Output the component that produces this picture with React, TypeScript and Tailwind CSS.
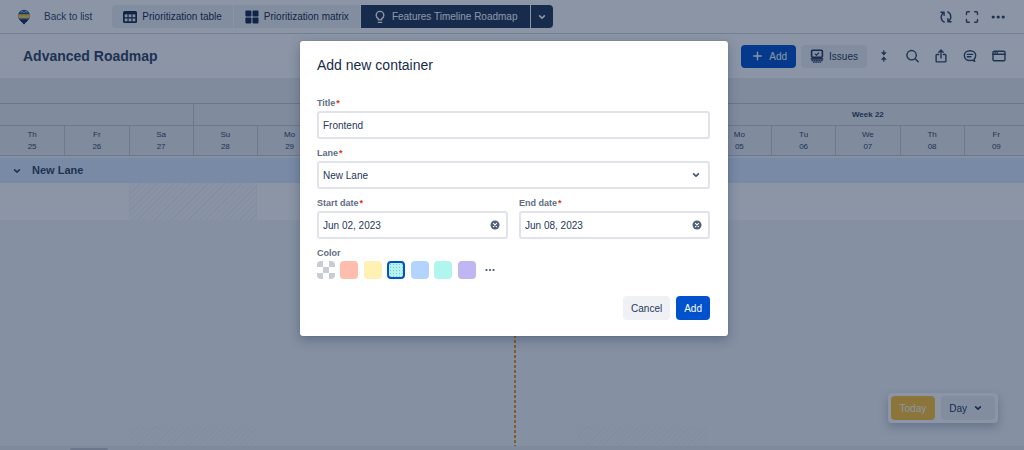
import { ReactNode } from "react";
import clsx from "clsx";

type IconProps = { className?: string };

const days = [
  ["Th", "25"],
  ["Fr", "26"],
  ["Sa", "27"],
  ["Su", "28"],
  ["Mo", "29"],
  ["Tu", "30"],
  ["We", "31"],
  ["Th", "01"],
  ["Fr", "02"],
  ["Sa", "03"],
  ["Su", "04"],
  ["Mo", "05"],
  ["Tu", "06"],
  ["We", "07"],
  ["Th", "08"],
  ["Fr", "09"],
];

const swatches = [
  {
    name: "Transparent",
    fill: "bg-[conic-gradient(#fff_25%,#c9ccd6_0_50%,#fff_0_75%,#c9ccd6_0)] bg-[length:12px_12px]",
  },
  { name: "Red", fill: "bg-[#ffbdad]" },
  { name: "Yellow", fill: "bg-[#fff0b3]" },
  {
    name: "Teal dotted",
    fill: "bg-[#b3f5ee] bg-[radial-gradient(circle,#8cc0cc_35%,transparent_45%)] bg-[length:3px_3px]",
  },
  { name: "Blue", fill: "bg-[#b3d4ff]" },
  { name: "Teal", fill: "bg-[#b0f5ee]" },
  { name: "Purple", fill: "bg-[#c0b6f2]" },
];

function Chevron({ className }: IconProps) {
  return (
    <svg viewBox="0 0 10 10" className={clsx("h-[10px] w-[10px]", className)} fill="none" stroke="currentColor" strokeWidth="1.6" strokeLinecap="round" strokeLinejoin="round">
      <path d="M2.6 3.9 5 6.2l2.4-2.3" />
    </svg>
  );
}

function Logo() {
  return (
    <svg viewBox="0 0 14 16" className="h-4 w-[14px]">
      <path d="M7 .8a6 6 0 0 0-6 6c0 2.6 1.6 4.4 3.3 6.2h5.4C11.4 11.2 13 9.4 13 6.8a6 6 0 0 0-6-6z" fill="#24508f" />
      <path d="M1.3 5.2h11.4c.4 1.7.1 3-.6 4.3H1.9C1.2 8.2.9 6.9 1.3 5.2z" fill="#ffc42e" />
      <path d="M3.5 3.7 5.2 2.3 7 3.7l1.8-1.4 1.7 1.4M2 8.4l1.7-1.2 1.7 1.2L7 7.2l1.7 1.2 1.7-1.2L12 8.4" fill="none" stroke="#d8e2f2" strokeWidth=".8" />
      <path d="M3.4 11h7.2L7.8 14.7a1 1 0 0 1-1.6 0z" fill="#172b4d" />
    </svg>
  );
}

function TableIcon() {
  return (
    <svg viewBox="0 0 14 12" className="h-3 w-[14px]">
      <rect width="14" height="12" rx="1.5" fill="currentColor" />
      <g fill="#eff0f3">
        <rect x="1.7" y="3.4" width="2.8" height="2.8" />
        <rect x="5.6" y="3.4" width="2.8" height="2.8" />
        <rect x="9.5" y="3.4" width="2.8" height="2.8" />
        <rect x="1.7" y="7.5" width="2.8" height="2.8" />
        <rect x="5.6" y="7.5" width="2.8" height="2.8" />
        <rect x="9.5" y="7.5" width="2.8" height="2.8" />
      </g>
    </svg>
  );
}

function MatrixIcon() {
  return (
    <svg viewBox="0 0 14 14" className="h-[14px] w-[14px]" fill="currentColor">
      <rect x=".4" y=".6" width="6" height="5.9" rx=".8" />
      <rect x="7.5" y=".6" width="6" height="5.9" rx=".8" />
      <rect x=".4" y="7.5" width="6" height="5.9" rx=".8" />
      <rect x="7.5" y="7.5" width="6" height="5.9" rx=".8" />
    </svg>
  );
}

function Stroke({ children }: { children: ReactNode }) {
  return (
    <svg viewBox="0 0 14 14" className="h-[14px] w-[14px]" fill="none" stroke="currentColor" strokeWidth="1.4" strokeLinecap="round" strokeLinejoin="round">
      {children}
    </svg>
  );
}

function IconButton({ label, children }: { label: string; children: ReactNode }) {
  return (
    <button type="button" aria-label={label} className="flex items-center justify-center text-[#344563]">
      {children}
    </button>
  );
}

function TopBar() {
  return (
    <header className="flex h-[34px] items-center border-b border-[#d5d8de] pr-[19px] pl-[17px]">
      <Logo />
      <a href="#list" className="ml-[13px] text-[#344563]">
        Back to list
      </a>
      <nav className="ml-5 flex h-[23px] gap-px text-[#172b4d]">
        <button type="button" className="flex items-center gap-[5px] rounded-l-sm bg-[#eff0f3] px-[11px]">
          <TableIcon />
          Prioritization table
        </button>
        <button type="button" className="flex items-center gap-[5px] bg-[#eff0f3] px-[11px]">
          <MatrixIcon />
          Prioritization matrix
        </button>
        <button type="button" className="flex items-center gap-[5px] bg-[#253858] px-3 text-white">
          <Stroke>
            <path d="M5.4 9.9V8.7C4 8 3.2 6.7 3.2 5.2a3.8 3.8 0 0 1 7.6 0c0 1.5-.8 2.8-2.2 3.5v1.2zM5.4 12.4h3.2" />
          </Stroke>
          Features Timeline Roadmap
        </button>
        <button type="button" aria-label="More views" className="flex w-[22px] items-center justify-center rounded-r-sm bg-[#253858] text-white">
          <Chevron />
        </button>
      </nav>
      <div className="ml-auto flex gap-3">
        <IconButton label="Refresh">
          <Stroke>
            <path d="M5.2 12.1C3.4 11.3 2.2 9.4 2.2 7.2c0-2 1-3.7 2.7-4.7M1.9 2.2h3.2v3.2" />
            <path d="M8.8 1.9c1.8.8 3 2.7 3 4.9 0 2-1 3.7-2.7 4.7M12.1 11.8H8.9V8.6" />
          </Stroke>
        </IconButton>
        <IconButton label="Full screen">
          <Stroke>
            <path d="M1.5 4.5V2.7a1 1 0 0 1 1-1h1.8M9.7 1.7h1.8a1 1 0 0 1 1 1v1.8M12.5 9.5v1.8a1 1 0 0 1-1 1H9.7M4.3 12.3H2.5a1 1 0 0 1-1-1V9.5" />
          </Stroke>
        </IconButton>
        <IconButton label="More">
          <svg viewBox="0 0 14 14" className="h-[14px] w-[14px]" fill="currentColor">
            <circle cx="2.2" cy="7" r="1.6" />
            <circle cx="7.2" cy="7" r="1.6" />
            <circle cx="12.2" cy="7" r="1.6" />
          </svg>
        </IconButton>
      </div>
    </header>
  );
}

function Toolbar() {
  return (
    <div className="flex h-11 items-center pr-[18px] pl-[23px]">
      <h1 className="text-[14px] font-bold text-[#344563]">Advanced Roadmap</h1>
      <div className="ml-auto flex items-center gap-[5px]">
        <button type="button" className="flex h-[23px] items-center gap-[5px] rounded-sm bg-[#0052cc] px-[9px] text-white">
          <Stroke>
            <path d="M7.5 3.2v7.6M3.7 7h7.6" />
          </Stroke>
          Add
        </button>
        <button type="button" className="flex h-[23px] items-center gap-[5px] rounded-sm bg-[#eff0f3] px-[9px] text-[#253858]">
          <svg viewBox="0 0 14 14" className="h-[14px] w-[14px]" fill="none" stroke="currentColor" strokeWidth="1.6">
            <rect x="1.6" y="1.3" width="10.8" height="7" rx="1" />
            <path d="m5 4.9 1.5 1.3L9 3.7" strokeWidth="1.2" />
            <path d="M.8 9.9h12.4" strokeWidth="1.6" />
            <path d="M1.5 11.6h11" strokeWidth="1.2" strokeDasharray="1.8 .5" />
            <path d="M3 13.2h8" strokeWidth="1.2" strokeDasharray="1.8 .5" />
          </svg>
          Issues
        </button>
      </div>
      <div className="ml-[9px] flex items-center gap-[15px]">
        <IconButton label="Collapse rows">
          <svg viewBox="0 0 14 14" className="h-[14px] w-[14px]" fill="currentColor">
            <path d="M7.2 1.200h1.200V3.200h2.400L7.800 6.500 4.800 3.200h2.400zM7.200 12.800h1.200v-2h2.400L7.800 7.500 4.800 10.800h2.400z" />
          </svg>
        </IconButton>
        <IconButton label="Search">
          <Stroke>
            <circle cx="6.6" cy="6.2" r="4.7" />
            <path d="m10.1 9.7 3.1 3.1" />
          </Stroke>
        </IconButton>
        <IconButton label="Share">
          <Stroke>
            <path d="M4.6 5.5H2.9a.8.8 0 0 0-.8.8v5.8c0 .4.4.8.8.8h8.2c.4 0 .8-.4.8-.8V6.3a.8.8 0 0 0-.8-.8H9.4M7 9V1.2M4.8 3.200 7 1.100l2.200 2.100" />
          </Stroke>
        </IconButton>
        <IconButton label="Comments">
          <Stroke>
            <path d="M7 1.7c3.2 0 5.7 2.1 5.7 4.9 0 1.5-.6 2.7-1.6 3.6l.6 2.2-2.4-1.2c-.7.2-1.5.3-2.3.3-3.2 0-5.7-2.1-5.7-4.9S3.8 1.7 7 1.7zM4.3 5.4h5.4M4.3 7.8h3.6" />
          </Stroke>
        </IconButton>
        <IconButton label="Details panel">
          <Stroke>
            <rect x="1" y="2.2" width="12" height="9.6" rx="1.2" />
            <path d="M1 5.3h12M3 3.7h.2M5 3.7h.2" />
          </Stroke>
        </IconButton>
      </div>
    </div>
  );
}

const weekendClass =
  "h-5 self-end bg-[repeating-linear-gradient(135deg,#f4f5f7_0px,#f4f5f7_3px,#eef0f3_3px,#eef0f3_4px)]";

function Timeline() {
  return (
    <section className="flex flex-1 flex-col overflow-hidden bg-[#f4f5f8] text-[#344563]">
      <div className="-mr-1 flex flex-1 flex-col">
        <div className="bg-[#ebecf0] text-[8px] leading-3">
          <div className="h-[25px]" />
          <div className="flex h-[22px] overflow-hidden border-t border-[#bfc4ce]">
            <div className="w-3/16 shrink-0" />
            <div className="w-7/16 shrink-0 border-l border-[#c5cad3]" />
            <div className="flex w-7/16 shrink-0 items-center justify-center border-l border-[#c5cad3] font-bold">Week 22</div>
          </div>
          <div className="grid h-[31px] grid-cols-16 border-t border-b border-[#c5cad3]">
            {days.map(([day, date]) => (
              <div key={date} className="flex flex-col items-center justify-center border-l border-[#c5cad3] first:border-l-0">
                <span>{day}</span>
                <span>{date}</span>
              </div>
            ))}
          </div>
        </div>

        {/* Lane */}
        <div className="mt-[2px] flex h-[25px] items-center gap-[10px] bg-[#deebff] px-3">
          <Chevron />
          <h2 className="text-[11px] font-bold">New Lane</h2>
        </div>
        <div className="grid h-[37px] grid-cols-16 bg-white">
          <div className="col-span-2 col-start-3 border-x border-[#f4f5f7] bg-[repeating-linear-gradient(135deg,#fcfcfd_0px,#fcfcfd_3px,#f1f2f5_3px,#f1f2f5_4px)]" />
        </div>

        <div className="grid flex-1 grid-cols-16">
          <div className="col-start-9 row-start-1 w-[2px] bg-[repeating-linear-gradient(180deg,#f0951f_0px,#f0951f_3px,transparent_3px,transparent_5px)]" />
          <div className={clsx("col-span-2 col-start-3 row-start-1", weekendClass)} />
          <div className={clsx("col-span-2 col-start-10 row-start-1", weekendClass)} />
        </div>
        <div className="h-1 border-t border-[#e6e8ec] bg-[#eaebee] pt-px">
          <div className="ml-[70px] h-[2px] w-[38px] rounded-t bg-[#c5c7cc]" />
        </div>
      </div>
    </section>
  );
}

function ZoomPanel() {
  return (
    <div className="absolute right-[26px] bottom-[27px] flex gap-[6px] rounded-sm bg-white p-[3px] shadow-[0_4px_10px_rgba(9,30,66,0.25)]">
      <button type="button" className="h-6 rounded-sm bg-[#ffc233] px-[9px] text-white">
        Today
      </button>
      <button type="button" className="flex h-6 items-center gap-[6px] rounded-sm bg-[#eff0f3] pr-3 pl-2 text-[#253858]">
        Day
        <Chevron />
      </button>
    </div>
  );
}

const inputClass =
  "h-7 w-full appearance-none rounded-[3px] border-2 border-[#e1e3eb] bg-white pr-7 pl-1 text-[#253858] outline-none";

function Field({ id, label, children }: { id: string; label: string; children: ReactNode }) {
  return (
    <div className="flex flex-1 flex-col gap-[2px]">
      <label htmlFor={id} className="text-[9px] leading-3 font-bold text-[#5e6c84]">
        {label}
        <span className="ml-px text-[#de350b]">*</span>
      </label>
      <div className="relative">{children}</div>
    </div>
  );
}

function DateField({ id, label, value }: { id: string; label: string; value: string }) {
  return (
    <Field id={id} label={label}>
      <input id={id} type="text" defaultValue={value} className={inputClass} />
      <button type="button" aria-label={`Clear ${label}`} className="absolute inset-y-0 right-2 flex items-center">
        <svg viewBox="0 0 10 10" className="h-[10px] w-[10px]">
          <circle cx="5" cy="5" r="4.5" fill="#505f79" />
          <path d="m3.4 3.4 3.2 3.2M6.6 3.4 3.4 6.6" stroke="#fff" strokeWidth="1.1" strokeLinecap="round" />
        </svg>
      </button>
    </Field>
  );
}

function ContainerDialog() {
  return (
    <form
      role="dialog"
      aria-labelledby="dialog-title"
      className="w-full max-w-[428px] rounded-[3px] bg-white py-4 pr-[18px] pl-[17px] shadow-[0_0_1px_rgba(9,30,66,0.3),0_4px_12px_rgba(9,30,66,0.3)]"
    >
      <h2 id="dialog-title" className="text-[14px] leading-4 text-[#172b4d]">
        Add new container
      </h2>

      <div className="mt-6 flex flex-col gap-2">
        <Field id="title" label="Title">
          <input id="title" type="text" defaultValue="Frontend" className={inputClass} />
        </Field>
        <Field id="lane" label="Lane">
          <select id="lane" className={inputClass}>
            <option>New Lane</option>
          </select>
          <Chevron className="pointer-events-none absolute top-[9px] right-[9px] text-[#42526e]" />
        </Field>
        <div className="flex gap-[11px]">
          <DateField id="start" label="Start date" value="Jun 02, 2023" />
          <DateField id="end" label="End date" value="Jun 08, 2023" />
        </div>
        <fieldset>
          <legend className="mb-[2px] text-[9px] leading-3 font-bold text-[#5e6c84]">Color</legend>
          <div className="flex w-[182px] justify-between">
            {swatches.map((swatch) => (
              <input
                key={swatch.name}
                type="radio"
                name="color"
                aria-label={swatch.name}
                defaultChecked={swatch.name === "Teal dotted"}
                className={clsx(
                  "h-[18px] w-[18px] appearance-none rounded-[4px] border-[#0052cc] checked:border-2",
                  swatch.fill
                )}
              />
            ))}
            <button type="button" aria-label="More colors" className="flex h-[18px] w-[18px] items-center justify-center text-[#42526e]">
              <svg viewBox="0 0 10 4" className="h-1 w-[10px]" fill="currentColor">
                <circle cx="1.5" cy="2" r="1.1" />
                <circle cx="5" cy="2" r="1.1" />
                <circle cx="8.5" cy="2" r="1.1" />
              </svg>
            </button>
          </div>
        </fieldset>
      </div>

      <div className="mt-[17px] flex justify-end gap-[6px]">
        <button type="button" className="h-6 rounded-sm bg-[#f0f1f4] px-2 text-[#253858]">
          Cancel
        </button>
        <button type="submit" className="h-6 rounded-sm bg-[#0052cc] px-2 text-white">
          Add
        </button>
      </div>
    </form>
  );
}

export default function App() {
  return (
    <div className="relative flex min-h-screen flex-col bg-white font-['Liberation_Sans',Arial,sans-serif] text-[10px]">
      <TopBar />
      <Toolbar />
      <Timeline />
      <ZoomPanel />

      {/* Blanket */}
      <div className="absolute inset-0 flex items-start justify-center bg-[#091e42]/47 pt-[41px] pl-1">
        <ContainerDialog />
      </div>
    </div>
  );
}
